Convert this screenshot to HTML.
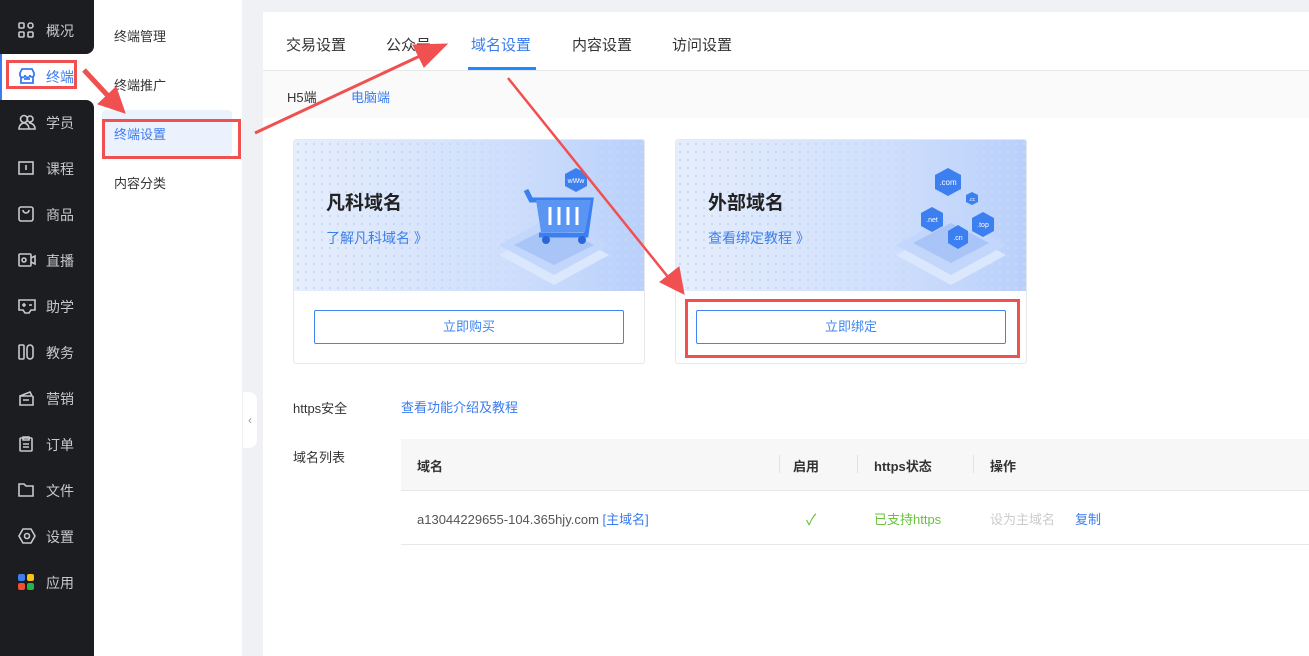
<!DOCTYPE html>
<html><head><meta charset="utf-8"><style>
*{margin:0;padding:0;box-sizing:border-box}
body{width:1309px;height:656px;overflow:hidden;background:#f0f1f4;font-family:"Liberation Sans","Noto Sans CJK SC",sans-serif;font-size:14px;color:#333;position:relative}
.abs{position:absolute}
.side{left:0;top:0;width:94px;height:656px;background:#1c1d21}
.si{position:absolute;left:0;width:94px;height:46px;color:#c8c9cc;font-size:14px;line-height:46px;padding-left:46px}
.si svg{position:absolute;left:18px;top:14px}
.sub{left:94px;top:0;width:148px;height:656px;background:#fff}
.sub div{position:absolute;left:20px;font-size:13px;color:#333}
.main{left:263px;top:12px;width:1046px;height:644px;background:#fff}
.tab{position:absolute;top:22px;font-size:15px;color:#333}
.card{position:absolute;top:139px;width:352px;height:225px;border:1px solid #e6e8ec;border-radius:3px;background:#fff;overflow:hidden}
.hd{height:151px;position:relative;background-image:radial-gradient(#c8d8f6 1px,transparent 1.4px),linear-gradient(90deg,#e6eefc,#cfdffc 60%,#b9d0fb);background-size:8px 8px,100% 100%}
.hd h3{position:absolute;left:32px;top:48px;font-size:19px;color:#222;font-weight:bold}
.hd a{position:absolute;left:32px;top:88px;font-size:14px;color:#3d7fe8}
.btn{position:absolute;left:20px;top:170px;width:310px;height:34px;border:1px solid #3f86f0;color:#3f86f0;text-align:center;line-height:32px;font-size:13px;border-radius:2px}
.rb{position:absolute;border:3px solid #f05050}
</style></head><body>
<div class="abs" style="left:0;top:0;width:94px;height:656px;background:#fff"></div>
<div class="abs" style="left:0;top:0;width:94px;height:54px;background:#1c1d21;border-radius:0 0 8px 0"></div>
<div class="abs" style="left:0;top:100px;width:94px;height:556px;background:#1c1d21;border-radius:0 8px 0 0"></div>
<div class="si" style="top:8px"><svg width="16" height="16" viewBox="0 0 16 16" fill="none" stroke="#c8c9cc" stroke-width="1.6"><rect x="1" y="1" width="5" height="5" rx="1"/><rect x="10" y="1" width="5" height="5" rx="2.5"/><rect x="1" y="10" width="5" height="5" rx="1"/><rect x="10" y="10" width="5" height="5" rx="1"/></svg>概况</div>
<div class="abs" style="left:0;top:54px;width:2px;height:46px;background:#3a7cf0"></div>
<div class="si" style="top:54px;color:#3a7cf0"><svg width="18" height="16" viewBox="0 0 18 16" fill="none" stroke="#3a7cf0" stroke-width="1.8"><path d="M2 5L4 1h10l2 4v2a2 2 0 0 1-4 0a2 2 0 0 1-5 0a2 2 0 0 1-5 0z"/><path d="M3 8v7h12V8M6 11h6"/></svg>终端</div>
<div class="si" style="top:100px"><svg width="18" height="16" viewBox="0 0 18 16" fill="none" stroke="#c8c9cc" stroke-width="1.6"><circle cx="6" cy="5" r="3.5"/><circle cx="12" cy="5" r="3"/><path d="M1 15c0-4 3-6 5-6s5 2 5 6zM11 9c3 0 6 2 6 6h-6"/></svg>学员</div>
<div class="si" style="top:146px"><svg width="16" height="16" viewBox="0 0 16 16" fill="none" stroke="#c8c9cc" stroke-width="1.6"><rect x="1" y="2" width="14" height="12"/><path d="M8 5v5"/></svg>课程</div>
<div class="si" style="top:192px"><svg width="16" height="16" viewBox="0 0 16 16" fill="none" stroke="#c8c9cc" stroke-width="1.6"><rect x="1" y="1" width="14" height="14" rx="2"/><path d="M5 4a3 3 0 0 0 6 0"/></svg>商品</div>
<div class="si" style="top:238px"><svg width="18" height="16" viewBox="0 0 18 16" fill="none" stroke="#c8c9cc" stroke-width="1.6"><rect x="1" y="2" width="12" height="12" rx="1"/><circle cx="6" cy="8" r="2"/><path d="M13 6l4-2v8l-4-2"/></svg>直播</div>
<div class="si" style="top:284px"><svg width="18" height="16" viewBox="0 0 18 16" fill="none" stroke="#c8c9cc" stroke-width="1.6"><path d="M1 2h16v10h-4l-2 3H7l-2-3H1z"/><path d="M4 7h4M6 5v4M11 7h3"/></svg>助学</div>
<div class="si" style="top:330px"><svg width="16" height="16" viewBox="0 0 16 16" fill="none" stroke="#c8c9cc" stroke-width="1.6"><rect x="1" y="1" width="5" height="14" rx="1"/><rect x="9" y="1" width="6" height="14" rx="3"/></svg>教务</div>
<div class="si" style="top:376px"><svg width="18" height="16" viewBox="0 0 18 16" fill="none" stroke="#c8c9cc" stroke-width="1.6"><path d="M2 6l10-4 2 4H2v9h13V6M5 10h6"/></svg>营销</div>
<div class="si" style="top:422px"><svg width="16" height="16" viewBox="0 0 16 16" fill="none" stroke="#c8c9cc" stroke-width="1.6"><rect x="2" y="2" width="12" height="13" rx="1"/><path d="M5 1h6v3H5zM5 8h6M5 11h6"/></svg>订单</div>
<div class="si" style="top:468px"><svg width="16" height="16" viewBox="0 0 16 16" fill="none" stroke="#c8c9cc" stroke-width="1.6"><path d="M1 2h5l2 2h7v10H1z"/></svg>文件</div>
<div class="si" style="top:514px"><svg width="18" height="16" viewBox="0 0 18 16" fill="none" stroke="#c8c9cc" stroke-width="1.6"><path d="M5 1h8l4 7-4 7H5L1 8z"/><circle cx="9" cy="8" r="2.5"/></svg>设置</div>
<div class="si" style="top:560px;color:#c8c9cc"><svg width="16" height="16" viewBox="0 0 16 16"><rect x="0" y="0" width="7" height="7" rx="2" fill="#3d7ff0"/><rect x="9" y="0" width="7" height="7" rx="2" fill="#f6c21b"/><rect x="0" y="9" width="7" height="7" rx="2" fill="#f0502f"/><rect x="9" y="9" width="7" height="7" rx="2" fill="#22b845"/></svg>应用</div>
<div class="abs sub">
<div style="top:26px">终端管理</div>
<div style="top:75px">终端推广</div>
<div style="left:8px;top:110px;width:130px;height:46px;background:#ebf1fd;border-radius:4px"></div>
<div style="top:124px;color:#3a7cf0">终端设置</div>
<div style="top:173px">内容分类</div>
</div>
<div class="abs" style="left:243px;top:392px;width:14px;height:56px;background:#fff;border-radius:0 8px 8px 0;color:#999;font-size:12px;line-height:56px;text-align:center">‹</div>
<div class="abs main">
<div class="tab" style="left:23px">交易设置</div>
<div class="tab" style="left:123px">公众号</div>
<div class="tab" style="left:208px;color:#3a7cf0">域名设置</div>
<div class="abs" style="left:205px;top:55px;width:68px;height:3px;background:#1a8cff"></div>
<div class="tab" style="left:309px">内容设置</div>
<div class="tab" style="left:409px">访问设置</div>
<div class="abs" style="left:0;top:58px;width:1046px;height:48px;background:#fafafa;border-top:1px solid #e8e8e8"></div>
<div class="abs" style="left:24px;top:75px;font-size:13px">H5端</div>
<div class="abs" style="left:88px;top:75px;font-size:13px;color:#3a7cf0">电脑端</div>
<div class="abs" style="left:30px;top:386px;font-size:13px">https安全</div>
<div class="abs" style="left:138px;top:385px;font-size:13px;color:#3a7cf0">查看功能介绍及教程</div>
<div class="abs" style="left:30px;top:435px;font-size:13px">域名列表</div>
<div class="abs" style="left:138px;top:427px;width:908px;height:52px;background:#f7f7f7;border-bottom:1px solid #e8e8e8"></div>
<div class="abs" style="left:154px;top:444px;font-size:13px;font-weight:bold">域名</div>
<div class="abs" style="left:530px;top:444px;font-size:13px;font-weight:bold">启用</div>
<div class="abs" style="left:611px;top:444px;font-size:13px;font-weight:bold">https状态</div>
<div class="abs" style="left:727px;top:444px;font-size:13px;font-weight:bold">操作</div>
<div class="abs" style="left:516px;top:443px;width:1px;height:18px;background:#e3e3e3"></div>
<div class="abs" style="left:594px;top:443px;width:1px;height:18px;background:#e3e3e3"></div>
<div class="abs" style="left:710px;top:443px;width:1px;height:18px;background:#e3e3e3"></div>
<div class="abs" style="left:154px;top:497px;font-size:13px;color:#555">a13044229655-104.365hjy.com <span style="color:#3a7cf0">[主域名]</span></div>
<div class="abs" style="left:543px;top:497px;font-size:15px;color:#67c23a">✓</div>
<div class="abs" style="left:611px;top:497px;font-size:13px;color:#67c23a">已支持https</div>
<div class="abs" style="left:727px;top:497px;font-size:13px;color:#ccc">设为主域名</div>
<div class="abs" style="left:812px;top:497px;font-size:13px;color:#3a7cf0">复制</div>
<div class="abs" style="left:138px;top:532px;width:908px;height:1px;background:#e8e8e8"></div>
</div>
<div class="card" style="left:293px"><div class="hd"><h3>凡科域名</h3><a>了解凡科域名 》</a>
<svg class="abs" style="left:190px;top:25px" width="140" height="120" viewBox="0 0 140 120"><path d="M70 60l55 30-55 30-55-30z" fill="#dbe7fd"/><path d="M70 50l55 30-55 30-55-30z" fill="#c3d6fb"/><path d="M70 60l40 20-40 20-40-20z" fill="#a9c4f7"/><path d="M42 25l5 10h60l-5 35H55" fill="none" stroke="#3c7ff0" stroke-width="5"/><path d="M52 35h55l-6 32H57z" fill="#5a95f4"/><path d="M66 42v18M75 42v18M84 42v18M93 42v18" stroke="#fff" stroke-width="3"/><circle cx="62" cy="75" r="4" fill="#2a66d8"/><circle cx="98" cy="75" r="4" fill="#2a66d8"/><path d="M92 3l11 6v12l-11 6-11-6V9z" fill="#3c7ff0"/><text x="92" y="18" font-size="7" fill="#fff" text-anchor="middle" font-family="Liberation Sans">wWw</text></svg></div>
<div class="btn">立即购买</div></div>
<div class="card" style="left:675px"><div class="hd"><h3>外部域名</h3><a>查看绑定教程 》</a>
<svg class="abs" style="left:210px;top:25px" width="130" height="120" viewBox="0 0 130 120"><path d="M65 60l55 30-55 30-55-30z" fill="#dbe7fd"/><path d="M65 50l55 30-55 30-55-30z" fill="#c3d6fb"/><path d="M65 58l38 20-38 20-38-20z" fill="#a9c4f7"/><path d="M62 3l13 7v14l-13 7-13-7V10z" fill="#3c7ff0"/><text x="62" y="20" font-size="8" fill="#fff" text-anchor="middle" font-family="Liberation Sans">.com</text><path d="M86 27l6 3v7l-6 3-6-3v-7z" fill="#3c7ff0"/><text x="86" y="36" font-size="5" fill="#fff" text-anchor="middle">.cc</text><path d="M46 42l11 6v13l-11 6-11-6V48z" fill="#3c7ff0"/><text x="46" y="57" font-size="7" fill="#fff" text-anchor="middle">.net</text><path d="M97 47l11 6v13l-11 6-11-6V53z" fill="#3c7ff0"/><text x="97" y="62" font-size="7" fill="#fff" text-anchor="middle">.top</text><path d="M72 60l10 6v12l-10 6-10-6V66z" fill="#3c7ff0"/><text x="72" y="75" font-size="7" fill="#fff" text-anchor="middle">.cn</text></svg></div>
<div class="btn">立即绑定</div></div>
<div class="rb" style="left:6px;top:60px;width:71px;height:29px"></div>
<div class="rb" style="left:102px;top:119px;width:139px;height:40px"></div>
<div class="rb" style="left:685px;top:299px;width:335px;height:59px"></div>
<svg class="abs" style="left:0;top:0" width="1309" height="656">
<g fill="#f05050" stroke="#f05050">
<path d="M84 70L110 98" stroke-width="5"/><path d="M125 113L98 104L116 87z"/>
<path d="M255 133L420 56" stroke-width="3"/><path d="M447 44L424 67L413 45z" />
<path d="M508 78L668 277" stroke-width="2.5"/><path d="M684 294L660 282L679 267z"/>
</g></svg>
</body></html>
